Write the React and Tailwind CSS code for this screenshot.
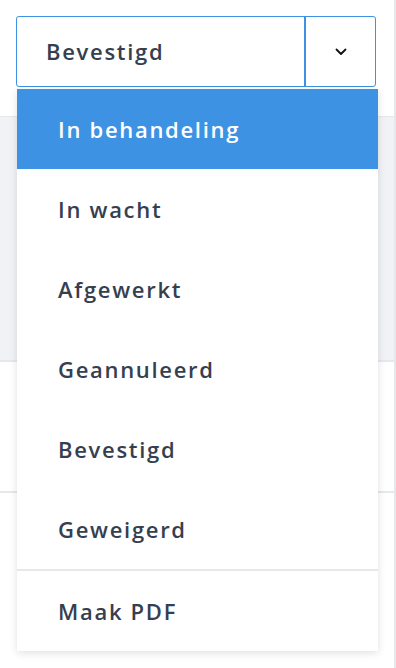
import { useState } from 'react'

const STATUSES = ['In behandeling', 'In wacht', 'Afgewerkt', 'Geannuleerd', 'Bevestigd', 'Geweigerd']

export default function App() {
  const [active, setActive] = useState('In behandeling')
  const [value] = useState('Bevestigd')

  return (
    <div
      className="relative w-[396px] h-[668px] overflow-hidden bg-white text-[#363f50]"
      style={{ fontFamily: '"Open Sans", Lato, sans-serif' }}
    >
      {/* page behind the menu */}
      <div className="flex h-full">
        <div className="flex-1 flex flex-col">
          <div className="h-[117px] border-b border-[#e6e8ec] bg-white px-4 pt-4">
            <div className="flex h-[71px] w-[360px] rounded-[3px] border border-[#3d92e3]">
              <div className="flex flex-1 items-center pl-[29px] text-[22px] font-semibold tracking-[1.7px]">{value}</div>
              <div className="flex w-[71px] items-center justify-center border-l-2 border-[#3d92e3]">
                <svg width="12" height="8" viewBox="0 0 12 8" fill="none">
                  <path d="M1.5 1.5 6 6l4.5-4.5" stroke="#111" strokeWidth="1.8" strokeLinecap="round" strokeLinejoin="round" />
                </svg>
              </div>
            </div>
          </div>
          <div className="h-[245px] border-b-2 border-[#e6e8ec] bg-[#f1f2f6]" />
          <div className="h-[131px] border-b-2 border-[#e6e8ec] bg-white" />
          <div className="flex-1 bg-white" />
        </div>
        <div className="w-[2px] bg-[#e6e8ec]" />
      </div>

      {/* status menu */}
      <div className="absolute left-[17px] top-[89px] w-[361px] bg-white shadow-[0_2px_8px_rgba(0,0,0,0.12)]">
        {STATUSES.map(s => (
          <button
            key={s}
            onClick={() => setActive(s)}
            className={`flex h-[80px] w-full items-center px-[41px] text-left text-[22px] font-semibold tracking-[1.7px] ${
              active === s ? 'bg-[#3d92e3] text-white' : 'text-[#363f50]'
            }`}
          >
            {s}
          </button>
        ))}
        <div className="border-t-2 border-[#e6e8ec]">
          <button className="flex h-[80px] w-full items-center px-[41px] text-left text-[22px] font-semibold tracking-[1.7px]">
            Maak PDF
          </button>
        </div>
      </div>
    </div>
  )
}
